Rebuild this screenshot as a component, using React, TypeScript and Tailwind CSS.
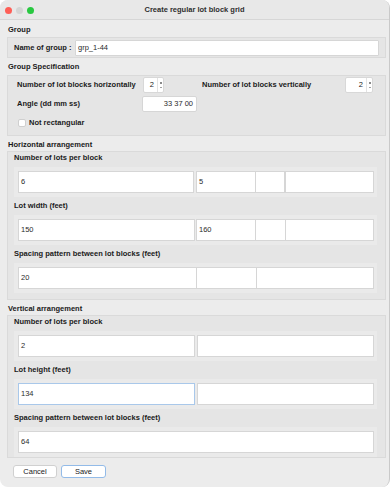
import { useState } from 'react'

const font = { fontFamily: '"Liberation Sans", Arial, sans-serif' }

function Field({ value, className = '', focused, right }: { value?: string; className?: string; focused?: boolean; right?: boolean }) {
  return (
    <div
      className={`h-[22px] bg-white flex items-center px-[2px] text-[7.5px] text-[#2a2a2a] border ${
        focused ? 'border-[#a9c8ea]' : 'border-[#d6d6d6]'
      } ${right ? 'justify-end' : ''} ${className}`}
    >
      {value}
    </div>
  )
}

function Spin({ value, wide }: { value: string; wide?: boolean }) {
  return (
    <div className={`flex h-[16px] bg-white border border-[#d8d8d8] rounded-[2px] ${wide ? 'w-[28px]' : 'w-[21px]'}`}>
      <div className="flex-1 text-right pr-[3px] text-[7.5px] leading-[14px] text-[#1a1a1a]">{value}</div>
      <div className="w-[6px] border-l border-[#e2e2e2] flex flex-col items-center justify-center gap-[3px]">
        <div className="w-[2px] h-[2px] bg-[#8a8a8a]" />
        <div className="w-[2px] h-[1px] bg-[#a0a0a0]" />
      </div>
    </div>
  )
}

function Label({ children, className = '' }: { children: React.ReactNode; className?: string }) {
  return <div className={`text-[7.5px] font-bold text-[#1a1a1a] leading-[10px] h-[10px] whitespace-nowrap ${className}`}>{children}</div>
}

function Row({ children }: { children: React.ReactNode }) {
  return <div className="bg-[#eaeaea] ml-[6px] mr-[8px] pl-[4px] pr-[3px] py-[4px] -my-[4px] flex">{children}</div>
}

export default function App() {
  const [checked, setChecked] = useState(false)
  return (
    <div style={font} className="w-[392px] h-[487px] bg-white">
      <div className="w-[390px] h-[487px] bg-[#ececec] rounded-[8px] border-r border-[#c9c9c9] overflow-hidden flex flex-col">
        <div className="h-[20px] shrink-0 bg-[#e8e8e8] border-b border-[#d6d6d6] flex items-center relative">
          <div className="flex gap-[4px] pl-[5px] pt-[1px]">
            <div className="w-[7px] h-[7px] rounded-full bg-[#fe5f57]" />
            <div className="w-[7px] h-[7px] rounded-full bg-[#d4d4d4]" />
            <div className="w-[7px] h-[7px] rounded-full bg-[#28c840]" />
          </div>
          <div className="absolute inset-0 flex items-center justify-center text-[7.5px] font-bold text-[#2e2e2e]">
            Create regular lot block grid
          </div>
        </div>

        <div className="pl-[7px] pr-[3px] pt-[5px]">
          <Label className="pl-[1px]">Group</Label>
          <div className="mt-[2px] h-[21px] bg-[#e5e5e5] border border-[#dadada] pl-[6px] pr-[6px] flex items-center">
            <span className="text-[7.5px] font-bold text-[#1a1a1a] w-[61px] whitespace-nowrap">Name of group :</span>
            <Field value="grp_1-44" className="flex-1 !h-[16px] rounded-[1px]" />
          </div>

          <Label className="mt-[4px] pl-[1px]">Group Specification</Label>
          <div className="mt-[3px] h-[61px] bg-[#e5e5e5] border border-[#dadada] pl-[9px] pr-[12px] pt-[1px]">
            <div className="flex items-center h-[16px]">
              <span className="text-[7.5px] font-bold text-[#1a1a1a] w-[126px] whitespace-nowrap">Number of lot blocks horizontally</span>
              <Spin value="2" />
              <span className="ml-[38px] text-[7.5px] font-bold text-[#1a1a1a] flex-1 whitespace-nowrap">Number of lot blocks vertically</span>
              <Spin value="2" wide />
            </div>
            <div className="flex items-center h-[16px] mt-[3px]">
              <span className="text-[7.5px] font-bold text-[#1a1a1a] w-[125px]">Angle (dd mm ss)</span>
              <Field value="33 37 00" right className="w-[55px] !h-[16px] rounded-[2px] pr-[3px]" />
            </div>
            <label className="flex items-center h-[16px] mt-[3px] gap-[3px] pl-[1px]">
              <input
                type="checkbox"
                checked={checked}
                onChange={e => setChecked(e.target.checked)}
                className="appearance-none w-[8px] h-[8px] bg-white border border-[#cfcfcf] rounded-[2px]"
              />
              <span className="text-[7.5px] font-bold text-[#1a1a1a]">Not rectangular</span>
            </label>
          </div>

          <Label className="mt-[4px] pl-[1px]">Horizontal arrangement</Label>
          <div className="mt-[1px] h-[149px] bg-[#e5e5e5] border border-[#dadada] pt-[1px]">
            <Label className="px-[6px]">Number of lots per block</Label>
            <div className="h-[8px]" />
            <Row>
              <Field value="6" className="w-[176px]" />
              <Field value="5" className="w-[60px] ml-[2px]" />
              <Field className="w-[29px] border-l-0" />
              <Field className="flex-1" />
            </Row>
            <Label className="px-[6px] mt-[8px] mb-[8px]">Lot width (feet)</Label>
            <Row>
              <Field value="150" className="w-[177px]" />
              <Field value="160" className="w-[60px] ml-[1px]" />
              <Field className="w-[30px] border-l-0" />
              <Field className="flex-1 border-l-0" />
            </Row>
            <Label className="px-[6px] mt-[8px] mb-[8px]">Spacing pattern between lot blocks (feet)</Label>
            <Row>
              <Field value="20" className="w-[179px]" />
              <Field className="w-[60px] border-l-0" />
              <Field className="flex-1 border-l-0" />
            </Row>
          </div>

          <Label className="mt-[4px] pl-[1px]">Vertical arrangement</Label>
          <div className="mt-[1px] h-[143px] bg-[#e5e5e5] border border-[#dadada] pt-[1px]">
            <Label className="px-[6px]">Number of lots per block</Label>
            <div className="h-[8px]" />
            <Row>
              <Field value="2" className="w-[177px]" />
              <Field className="flex-1 ml-[2px]" />
            </Row>
            <Label className="px-[6px] mt-[8px] mb-[8px]">Lot height (feet)</Label>
            <Row>
              <Field value="134" focused className="w-[177px]" />
              <Field className="flex-1 ml-[2px]" />
            </Row>
            <Label className="px-[6px] mt-[8px] mb-[8px]">Spacing pattern between lot blocks (feet)</Label>
            <Row>
              <Field value="64" className="flex-1" />
            </Row>
          </div>

          <div className="flex gap-[4px] mt-[7px] pl-[6px]">
            <button className="w-[44px] h-[13px] bg-white border border-[#d0d0d0] rounded-[3px] text-[7.5px] text-[#1a1a1a] leading-none">
              Cancel
            </button>
            <button className="w-[45px] h-[13px] bg-white border border-[#93bbe8] rounded-[3px] text-[7.5px] text-[#1a1a1a] leading-none">
              Save
            </button>
          </div>
        </div>
      </div>
    </div>
  )
}
